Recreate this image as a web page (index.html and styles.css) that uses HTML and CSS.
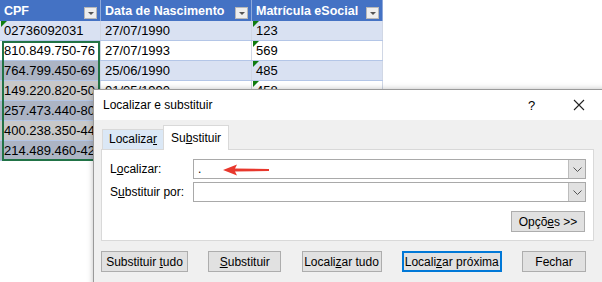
FILE: index.html
```html
<!DOCTYPE html>
<html>
<head>
  <meta charset="UTF-8">
  <link rel="stylesheet" href="styles.css">
</head>
<body>
  <div class="sheet">
    <table class="grid">
      <tr class="head">
        <th class="col-cpf">CPF<span class="filter"></span></th>
        <th class="col-data">Data de Nascimento<span class="filter"></span></th>
        <th class="col-mat">Matrícula eSocial<span class="filter"></span></th>
      </tr>
      <tr class="band"><td class="flag">02736092031</td><td>27/07/1990</td><td class="flag">123</td></tr>
      <tr><td>810.849.750-76</td><td>27/07/1993</td><td class="flag">569</td></tr>
      <tr class="band sel"><td>764.799.450-69</td><td>25/06/1990</td><td class="flag">485</td></tr>
      <tr class="sel"><td>149.220.820-50</td><td>01/05/1990</td><td class="flag">458</td></tr>
      <tr class="band sel"><td>257.473.440-80</td><td></td><td></td></tr>
      <tr class="sel"><td>400.238.350-44</td><td></td><td></td></tr>
      <tr class="band sel"><td>214.489.460-42</td><td></td><td></td></tr>
    </table>
    <div class="selection"></div>
  </div>

  <div class="dialog">
    <div class="titlebar">
      <span class="title">Localizar e substituir</span>
      <span class="help">?</span>
      <svg class="close" width="12" height="12" viewBox="0 0 12 12"><path d="M1 1 L11 11 M11 1 L1 11" stroke="#222" stroke-width="1.1" fill="none"/></svg>
    </div>
    <div class="body">
      <div class="tabs">
        <div class="tab">Localiza<u>r</u></div>
        <div class="tab active">Su<u>b</u>stituir</div>
      </div>
      <div class="panel">
        <div class="field">
          <span class="label">L<u>o</u>calizar:</span>
          <div class="combo">
            <span class="value">.</span>
            <svg class="arrow" width="46" height="12" viewBox="0 0 46 12"><path d="M0 6 L14 0.5 L12 4.6 L46 5 L46 7 L12 7.4 L14 11.5 Z" fill="#e8382d"/></svg>
            <span class="drop"><svg width="9" height="5" viewBox="0 0 9 5"><path d="M0.5 0.5 L4.5 4.5 L8.5 0.5" stroke="#555" fill="none"/></svg></span>
          </div>
        </div>
        <div class="field">
          <span class="label">S<u>u</u>bstituir por:</span>
          <div class="combo">
            <span class="value"></span>
            <span class="drop"><svg width="9" height="5" viewBox="0 0 9 5"><path d="M0.5 0.5 L4.5 4.5 L8.5 0.5" stroke="#555" fill="none"/></svg></span>
          </div>
        </div>
        <div class="options-row">
          <button class="btn btn-options">Opçõ<u>e</u>s &gt;&gt;</button>
        </div>
      </div>
      <div class="actions">
        <button class="btn w-tudo">Substituir <u>t</u>udo</button>
        <button class="btn w-subst"><u>S</u>ubstituir</button>
        <button class="btn w-loctudo">Locali<u>z</u>ar tudo</button>
        <button class="btn w-prox default">Locali<u>z</u>ar próxima</button>
        <button class="btn w-fechar">Fechar</button>
      </div>
    </div>
  </div>
</body>
</html>
```

FILE: styles.css
```css
body {
  margin: 0;
  width: 602px;
  height: 282px;
  overflow: hidden;
  position: relative;
  background: #fff;
  font-family: "Liberation Sans", Arial, sans-serif;
}

/* planilha */
.sheet {
  position: relative;
}
.grid {
  border-collapse: collapse;
  table-layout: fixed;
  font-size: 13px;
  color: #000;
}
.grid th, .grid td {
  padding: 0 0 0 4px;
  text-align: left;
  white-space: nowrap;
  overflow: hidden;
  position: relative;
}
.head th {
  height: 21px;
  background: #4472c4;
  color: #fff;
  font-size: 12.5px;
  font-weight: bold;
  border-right: 1px solid #8ea9db;
}
.col-cpf { width: 96px; }
.col-data { width: 146px; }
.col-mat { width: 126px; }
.filter {
  position: absolute;
  right: 3px;
  top: 7px;
  width: 13px;
  height: 12px;
  background: #eeeeee;
  border: 1px solid #b8b8b8;
  box-sizing: border-box;
}
.filter::after {
  content: "";
  position: absolute;
  left: 3px;
  top: 4px;
  border-left: 3px solid transparent;
  border-right: 3px solid transparent;
  border-top: 3px solid #555;
}
.grid td {
  height: 19px;
  line-height: 19px;
  border-bottom: 1px solid #b4c6e7;
  border-right: 1px solid #d0d7e5;
}
.band td {
  background: #d9e1f2;
}
.sel td:first-child {
  background: #c8c8c8;
}
.band.sel td:first-child {
  background: #acb4c4;
}
.flag::before {
  content: "";
  position: absolute;
  left: 1px;
  top: 0;
  border-top: 6px solid #107c10;
  border-right: 6px solid transparent;
}
.selection {
  position: absolute;
  left: 2px;
  top: 41px;
  width: 98px;
  height: 120px;
  border: 2px solid #217346;
  box-sizing: border-box;
}

/* caixa de dialogo */
.dialog {
  position: absolute;
  left: 93px;
  top: 89px;
  width: 522px;
  height: 200px;
  background: #f0f0f0;
  border: 1px solid #9a9a9a;
  box-shadow: 0 0 6px rgba(0, 0, 0, .25);
  font-size: 12px;
  color: #000;
}
.titlebar {
  height: 30px;
  background: #fff;
  display: flex;
  align-items: center;
  padding-left: 9px;
}
.title {
  flex: 1;
}
.help {
  width: 12px;
  margin-right: 33px;
  font-size: 13px;
}
.close {
  margin-right: 31px;
}
.body {
  padding: 4px 0 0 7px;
}
.tabs {
  display: flex;
  align-items: flex-end;
  height: 25px;
  padding-left: 1px;
}
.tab {
  height: 19px;
  line-height: 19px;
  padding: 0 6px;
  background: #dbe8f6;
  border: 1px solid #d9d9d9;
  border-bottom: none;
  border-right: none;
}
.tab.active {
  height: 24px;
  line-height: 24px;
  background: #fff;
  border-right: 1px solid #d9d9d9;
  padding: 0 7px;
  margin-bottom: -1px;
  position: relative;
}
.panel {
  width: 493px;
  background: #fff;
  border: 1px solid #d9d9d9;
  padding: 9px 7px 8px 8px;
  box-sizing: border-box;
}
.field {
  display: flex;
  align-items: center;
  margin-bottom: 3px;
}
.label {
  width: 83px;
}
.combo {
  position: relative;
  flex: 1;
  height: 20px;
  border: 1px solid #a9a9a9;
  box-sizing: border-box;
  display: flex;
  align-items: center;
}
.value {
  flex: 1;
  padding-left: 4px;
  line-height: 18px;
}
.arrow {
  position: absolute;
  left: 29px;
  top: 4px;
}
.drop {
  width: 17px;
  height: 18px;
  background: #e1e1e1;
  border-left: 1px solid #bdbdbd;
  display: flex;
  align-items: center;
  justify-content: center;
  box-sizing: border-box;
}
.options-row {
  display: flex;
  justify-content: flex-end;
  margin-top: 9px;
  padding-right: 1px;
}
.btn {
  height: 21px;
  background: #e1e1e1;
  border: 1px solid #adadad;
  font-family: "Liberation Sans", Arial, sans-serif;
  font-size: 12px;
  color: #000;
  padding: 0;
  box-sizing: border-box;
}
.btn-options {
  width: 74px;
}
.actions {
  display: flex;
  margin-top: 10px;
  width: 485px;
  justify-content: space-between;
}
.w-tudo { width: 87px; }
.w-subst { width: 73px; }
.w-loctudo { width: 80px; }
.w-prox { width: 100px; }
.w-fechar { width: 64px; }
.btn.default {
  border: 2px solid #0078d7;
}
```
